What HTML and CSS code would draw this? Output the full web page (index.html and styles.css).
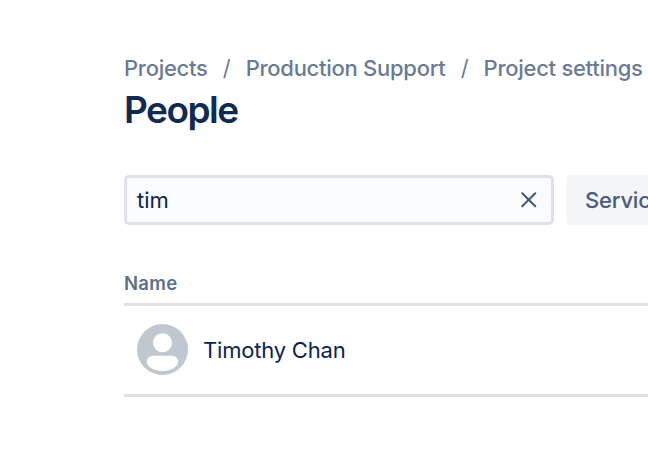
FILE: index.html
```html
<!DOCTYPE html>
<html lang="en">
<head>
    <meta charset="UTF-8">
    <meta name="viewport" content="width=device-width, initial-scale=1.0">
    <title>People - Production Support</title>
    <link rel="stylesheet" href="styles.css">
</head>
<body>

    <div class="page">
        <nav class="breadcrumbs">
            <a href="#">Projects</a>
            <span class="separator">/</span>
            <a href="#">Production Support</a>
            <span class="separator">/</span>
            <a href="#">Project settings</a>
        </nav>

        <h1>People</h1>

        <!-- Search and service filter -->
        <div class="filters">
            <div class="search">
                <span>tim</span>
                <svg class="clear" width="18" height="18" viewBox="0 0 18 18">
                    <path d="M2.2 2.2 15.3 15.3M15.3 2.2 2.2 15.3"/>
                </svg>
            </div>
            <div class="filter-btn">Service</div>
        </div>

        <!-- People list -->
        <div class="people">
            <div class="people-head">Name</div>
            <div class="people-row">
                <svg width="52" height="52" viewBox="0 0 52 52">
                    <circle cx="26.5" cy="25.5" r="25.5" fill="#c1c7d0"/>
                    <circle cx="26.5" cy="18.8" r="9.5" fill="#fff"/>
                    <path d="M10.8 38v-.3a6 6 0 0 1 6-6h19.4a6 6 0 0 1 6 6v.3c0 4.500-7 9-15.700 9s-15.700-4.500-15.700-9z" fill="#fff"/>
                </svg>
                <span class="person">Timothy Chan</span>
            </div>
        </div>
    </div>

</body>
</html>
```

FILE: styles.css
```css
body {
    margin: 0;
    background: #fff;
    color: #0a2450;
    font-family: Inter, 'Liberation Sans', sans-serif;
    font-size: 22px;
    overflow: hidden;
}

.page {
    padding: 53px 0 0 124px;
    overflow: hidden;
}

.breadcrumbs {
    display: flex;
    height: 30px;
    line-height: 30px;
    font-weight: 500;
    letter-spacing: -0.27px;
    white-space: nowrap;
}

.breadcrumbs a {
    flex-shrink: 0;
    color: #6b7a94;
    text-decoration: none;
}

.separator {
    flex-shrink: 0;
    width: 38px;
    color: #6b7a94;
    font-weight: 400;
    text-align: center;
}

h1 {
    height: 44px;
    margin: 5px 0 43px;
    color: #102a52;
    font-size: 37px;
    font-weight: 600;
    line-height: 44px;
    letter-spacing: -1.5px;
}

.filters {
    display: flex;
    gap: 12px;
}

.search {
    display: flex;
    flex-shrink: 0;
    align-items: center;
    justify-content: space-between;
    box-sizing: border-box;
    width: 430px;
    height: 50px;
    padding: 0 13px 0 10px;
    background: #fafbfd;
    border: 3px solid #dfe1e8;
    border-radius: 5px;
}

.clear {
    fill: none;
    stroke: #42567a;
    stroke-width: 2;
    stroke-linecap: round;
}

.filter-btn {
    flex: 1;
    min-width: 0;
    height: 50px;
    padding-left: 19px;
    overflow: hidden;
    background: #f4f5f7;
    border-radius: 5px 0 0 5px;
    color: #4a5b7c;
    font-weight: 500;
    line-height: 50px;
    letter-spacing: -0.2px;
}

.people {
    margin-top: 46px;
}

.people-head {
    height: 32px;
    border-bottom: 3px solid #dfe1e8;
    color: #5e6f8c;
    font-size: 18.5px;
    font-weight: 600;
    line-height: 24px;
    letter-spacing: 0.3px;
}

.people-row {
    display: flex;
    align-items: center;
    gap: 15px;
    height: 88px;
    padding-left: 12px;
    border-bottom: 3px solid #dfe1e6;
}

.person {
    letter-spacing: -0.2px;
}
```
